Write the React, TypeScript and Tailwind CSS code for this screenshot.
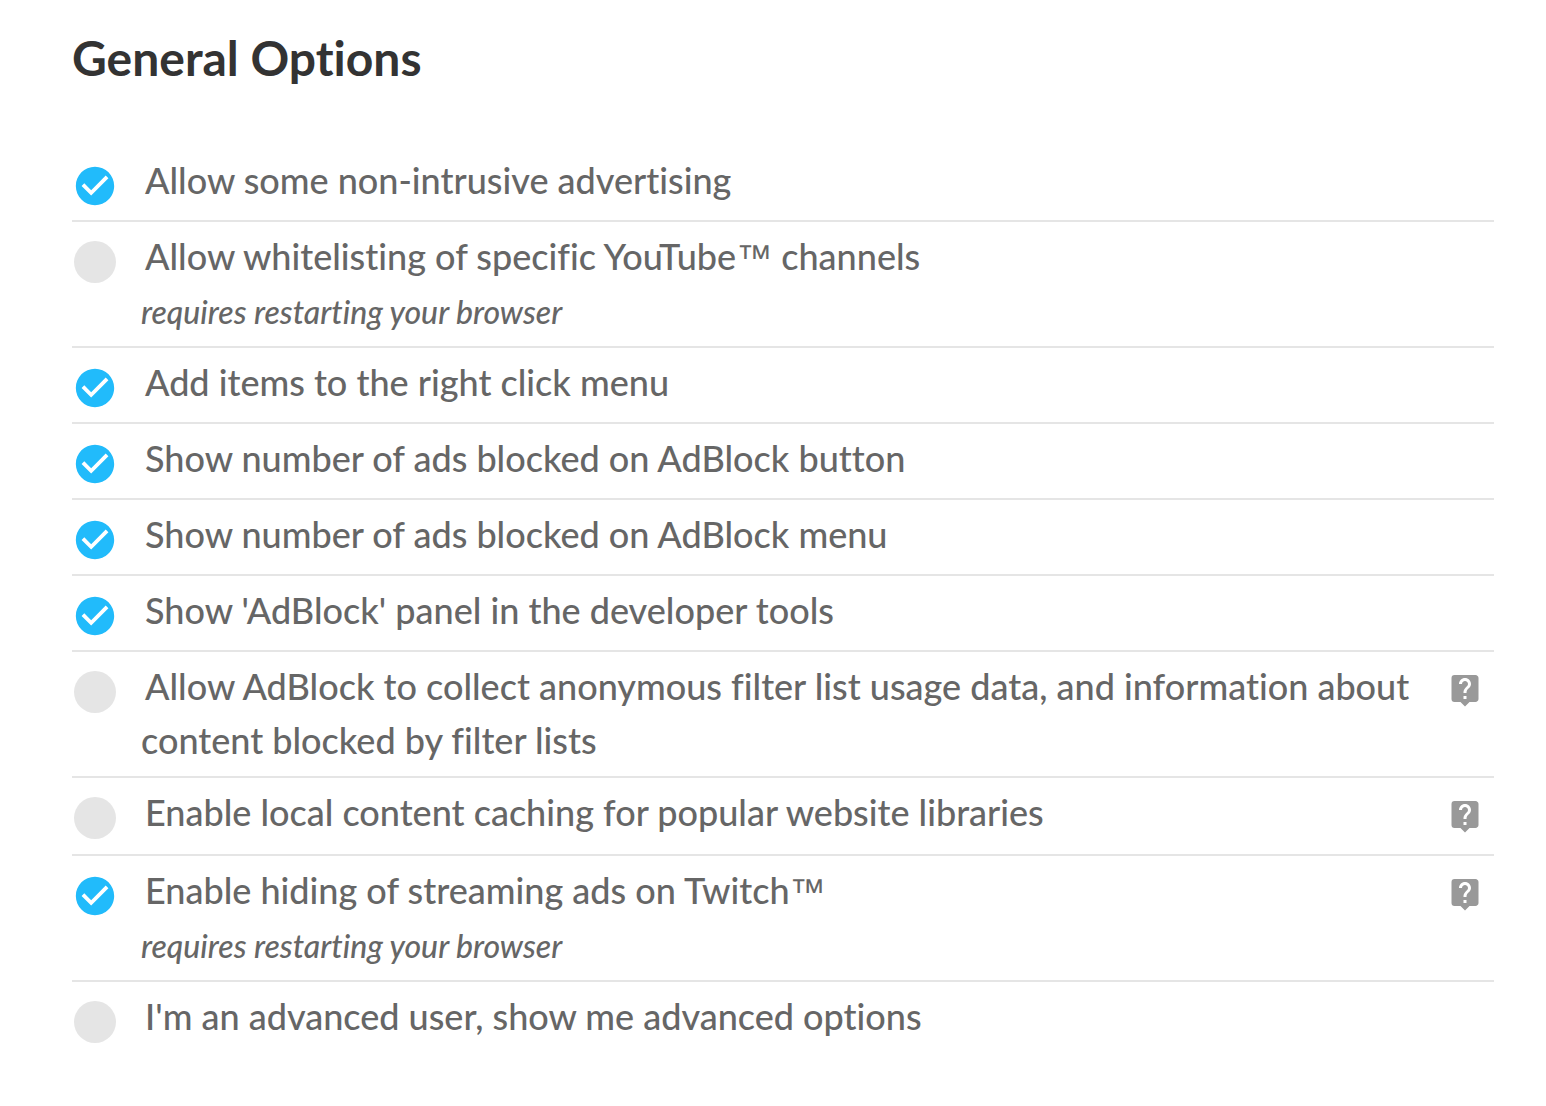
import { useState } from 'react'
import { MdCheckCircle, MdLiveHelp } from 'react-icons/md'
import clsx from 'clsx'

type Option = {
  id: string
  label: string
  trademark?: boolean
  suffix?: string
  note?: string
  help?: boolean
  checked: boolean
}

const RESTART_NOTE = 'requires restarting your browser'

const OPTIONS: Option[] = [
  { id: 'acceptable-ads', label: 'Allow some non-intrusive advertising', checked: true },
  {
    id: 'youtube-channels',
    label: 'Allow whitelisting of specific YouTube',
    trademark: true,
    suffix: ' channels',
    note: RESTART_NOTE,
    checked: false,
  },
  { id: 'context-menu', label: 'Add items to the right click menu', checked: true },
  { id: 'button-count', label: 'Show number of ads blocked on AdBlock button', checked: true },
  { id: 'menu-count', label: 'Show number of ads blocked on AdBlock menu', checked: true },
  { id: 'devtools', label: "Show 'AdBlock' panel in the developer tools", checked: true },
  {
    id: 'data-collection',
    label:
      'Allow AdBlock to collect anonymous filter list usage data, and information about content blocked by filter lists',
    help: true,
    checked: false,
  },
  {
    id: 'local-cdn',
    label: 'Enable local content caching for popular website libraries',
    help: true,
    checked: false,
  },
  {
    id: 'twitch',
    label: 'Enable hiding of streaming ads on Twitch',
    trademark: true,
    note: RESTART_NOTE,
    help: true,
    checked: true,
  },
  { id: 'advanced', label: "I'm an advanced user, show me advanced options", checked: false },
]

const OptionRow = ({ option }: { option: Option }) => {
  const [checked, setChecked] = useState(option.checked)

  return (
    <li className="flex items-start border-b-2 border-[#e5e5e5] last:border-b-0">
      {/* The check icon is stacked on the native checkbox */}
      <div className="grid h-[74px] w-[46px] shrink-0 place-items-center pt-[6px]">
        <input
          id={option.id}
          type="checkbox"
          checked={checked}
          onChange={(e) => setChecked(e.target.checked)}
          className={clsx(
            'col-start-1 row-start-1 size-[42px] cursor-pointer appearance-none rounded-full',
            checked ? 'bg-transparent' : 'bg-[#e5e5e5]'
          )}
        />
        {checked && (
          <MdCheckCircle className="pointer-events-none col-start-1 row-start-1 size-[46px] text-[#21bbfb]" />
        )}
      </div>

      <label
        htmlFor={option.id}
        className="ml-[23px] min-w-0 flex-1 cursor-pointer pt-[7px] pb-[9px]"
      >
        <span className="block indent-[4px] text-[36px] leading-[54px]">
          {option.label}
          {option.trademark && (
            <span className="font-['Liberation_Sans',sans-serif] leading-none">™</span>
          )}
          {option.suffix}
        </span>
        {option.note && (
          <span className="-mb-1 block text-[32px] leading-[58px] italic">{option.note}</span>
        )}
      </label>

      {option.help && (
        <button
          type="button"
          aria-label="Learn more"
          className="mr-[11px] ml-8 shrink-0 cursor-pointer py-5 text-[#999]"
        >
          <MdLiveHelp className="size-[36px]" />
        </button>
      )}
    </li>
  )
}

export default function App() {
  return (
    <main className="min-h-screen bg-white pt-5 pr-[52px] pb-12 pl-[72px] font-['Lato',sans-serif] font-medium text-[#666] [font-variant-ligatures:none]">
      <h1 className="text-[48px] leading-[76px] font-bold text-[#333]">General Options</h1>
      <ul className="mt-[50px]">
        {OPTIONS.map((option) => (
          <OptionRow key={option.id} option={option} />
        ))}
      </ul>
    </main>
  )
}
